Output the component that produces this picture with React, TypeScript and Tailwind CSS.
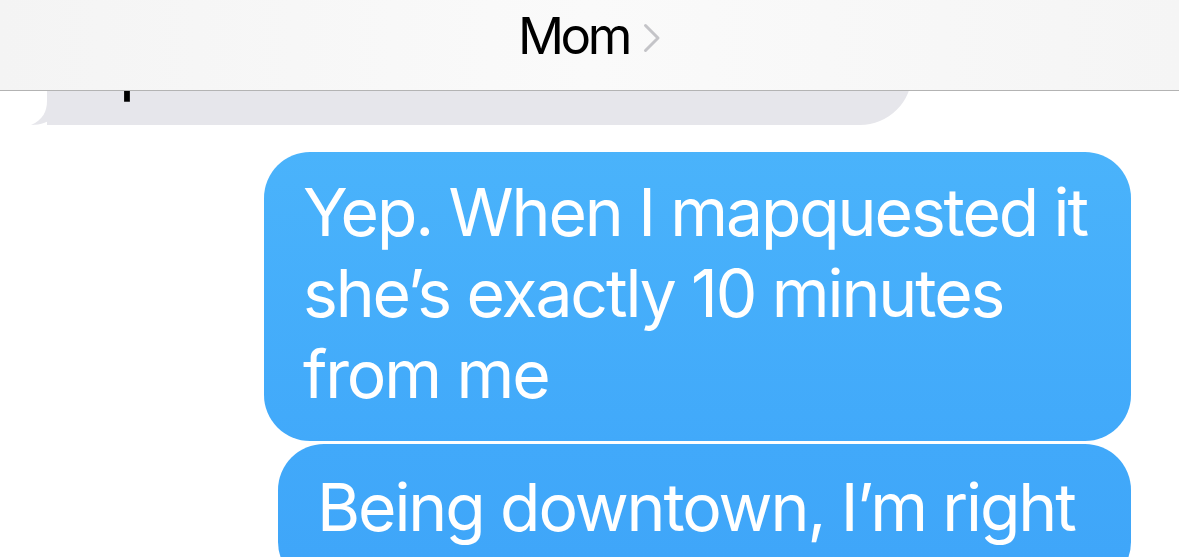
const font = { fontFamily: "Inter, 'Noto Sans', sans-serif" };

function Header() {
  return (
    <div className="relative z-10 flex h-[91px] items-center justify-center border-b border-[#b3b3b3] bg-[linear-gradient(90deg,#f4f4f4,#fafafa_50%,#f5f5f5)]">
      <div className="flex items-center pb-[20px]">
        <span className="text-[51px] leading-none tracking-[-3.4px] text-black">Mom</span>
        <svg className="ml-[14px] mt-[6px]" width="18" height="30" viewBox="0 0 18 30">
          <path d="M2.5 2.5 L15 15 L2.5 27.5" fill="none" stroke="#c4c4c8" strokeWidth="3" strokeLinecap="round" strokeLinejoin="round" />
        </svg>
      </div>
    </div>
  );
}

function IncomingBubble() {
  return (
    <div className="relative -mt-[70px] ml-[47px] mr-[267px]">
      <svg className="absolute bottom-0 -left-[16px]" width="40" height="24" viewBox="0 0 40 24">
        <path d="M16 0 C16 10 12 19 0 24 C10 24 18 21 24 15 C28 19 34 22 40 24 L40 0 Z" fill="#e6e6eb" />
      </svg>
      <div className="relative h-[104px] overflow-hidden rounded-br-[52px] rounded-tr-[52px] bg-[#e6e6eb] pl-[72px] pt-[3px] text-[66px] leading-[81px] text-black">
        p
      </div>
    </div>
  );
}

function OutgoingBubble({ lines, className }: { lines: string[]; className?: string }) {
  return (
    <div
      className={`self-end rounded-[46px] bg-fixed bg-[linear-gradient(180deg,#52b9fc_0%,#4ab3fb_27%,#41a9fa_80%,#3fa6f9_100%)] pl-[39px] pr-[44px] text-[66px] leading-[81px] text-white ${className ?? ""}`}
    >
      {lines.map((l) => (
        <div key={l} className="whitespace-nowrap tracking-[-2.1px]">
          {l}
        </div>
      ))}
    </div>
  );
}

export default function App() {
  return (
    <div className="h-[557px] w-[1179px] overflow-hidden bg-white" style={font}>
      <Header />
      <IncomingBubble />
      <div className="mr-[48px] mt-[27px] flex flex-col">
        <OutgoingBubble
          className="pb-[26px] pt-[20px]"
          lines={["Yep. When I mapquested it", "she\u2019s exactly 10 minutes", "from me"]}
        />
        <OutgoingBubble
          className="mt-[3px] w-[853px] pb-[40px] pt-[23px]"
          lines={["Being downtown, I\u2019m right"]}
        />
      </div>
    </div>
  );
}
